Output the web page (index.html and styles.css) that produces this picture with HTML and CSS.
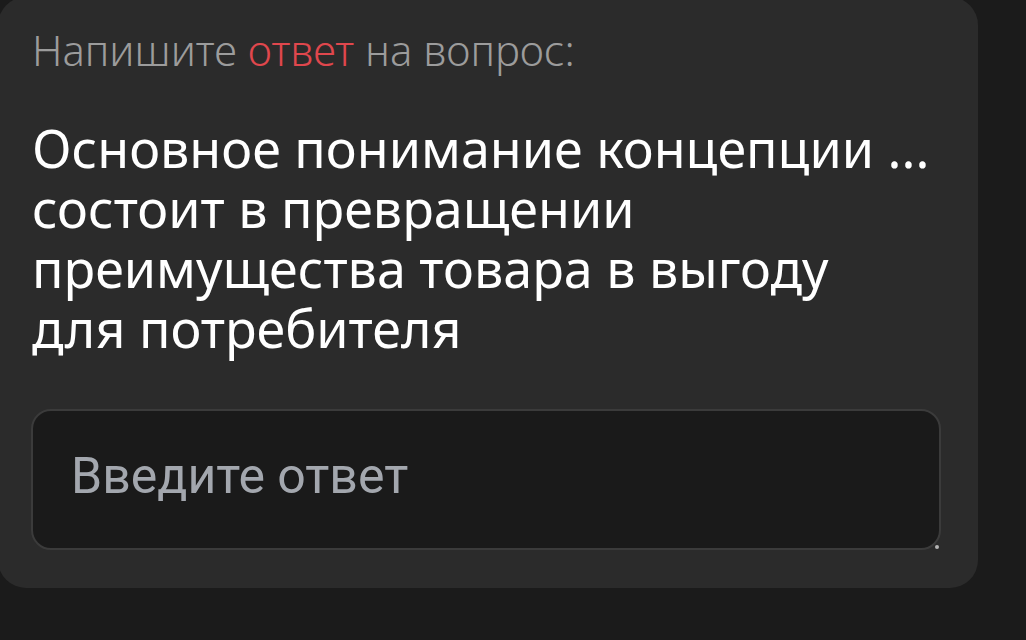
FILE: index.html
```html
<!DOCTYPE html>
<html lang="ru">
<head>
    <meta charset="UTF-8">
    <meta name="viewport" content="width=device-width, initial-scale=1.0">
    <title>Вопрос</title>
    <link rel="stylesheet" href="styles.css">
</head>
<body>

<div class="card">
    <p class="task">Напишите <span class="accent">ответ</span> на вопрос:</p>

    <p class="question">Основное понимание концепции ... состоит в превращении преимущества товара в выгоду для потребителя</p>

    <div class="answer">
        <textarea id="answer" placeholder="Введите ответ"></textarea>
        <span class="grip"></span>
    </div>
</div>

</body>
</html>
```

FILE: styles.css
```css
body {
    margin: 0;
    background-color: #1b1b1b;
    font-family: "Noto Sans", Arial, sans-serif;
    overflow: hidden;
}

.card {
    width: 980px;
    margin: -3px 0 0 -2px;
    padding: 28px 37px 38px 33px;
    box-sizing: border-box;
    background-color: #2b2b2b;
    border-radius: 28px;
}

.task {
    margin: 0 0 0 1px;
    font-size: 42px;
    font-weight: 300;
    line-height: 50px;
    color: #9c9c9c;
}

.task .accent {
    color: #e0474d;
}

.question {
    max-width: 900px;
    margin: 43px 0 0 1px;
    font-size: 52px;
    font-weight: 400;
    line-height: 60px;
    color: #fff;
}

.answer {
    position: relative;
    margin-top: 51px;
}

.answer textarea {
    display: block;
    width: 100%;
    height: 141px;
    padding: 39px 38px;
    box-sizing: border-box;
    font-family: Roboto, Arial, sans-serif;
    font-size: 50px;
    line-height: 52px;
    color: #fff;
    background-color: #1a1a1a;
    border: 2px solid #3b3b3b;
    border-radius: 20px;
    resize: none;
    outline: none;
}

.answer textarea::placeholder {
    color: #a3a7ae;
}

/* little resize dot in the corner */
.grip {
    position: absolute;
    right: 2px;
    bottom: 1px;
    width: 4px;
    height: 4px;
    border-radius: 50%;
    background-color: #b5b5b5;
}
```
